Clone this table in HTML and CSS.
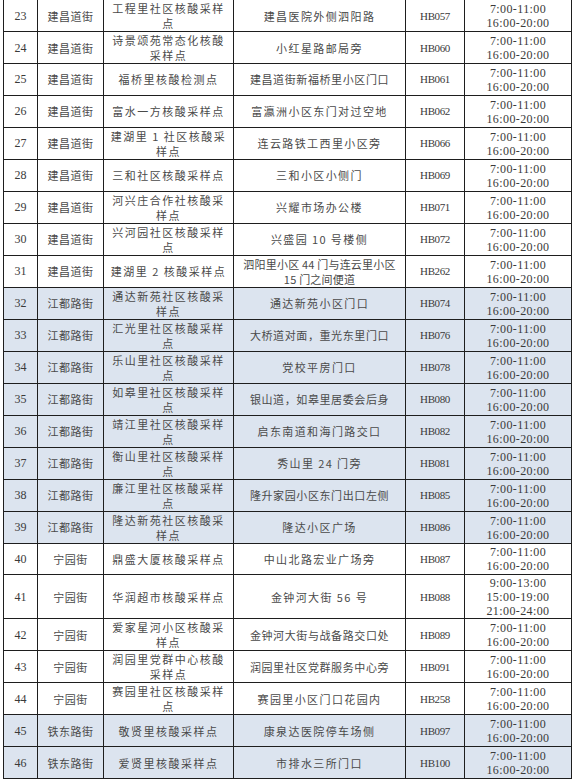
FILE: index.html
```html
<!DOCTYPE html>
<html lang="zh">
<head>
<meta charset="utf-8">
<title>核酸采样点</title>
<link rel="stylesheet" href="styles.css">
</head>
<body>
<div class="sheet">
<table class="grid">
<colgroup>
<col class="c-no"><col class="c-street"><col class="c-site"><col class="c-addr"><col class="c-code"><col class="c-time">
</colgroup>
<tbody>
<tr><td class="no">23</td><td class="street">建昌道街</td><td class="site">工程里社区核酸采样<br>点</td><td class="addr">建昌医院外侧泗阳路</td><td class="code">HB057</td><td class="time">7:00-11:00<br>16:00-20:00</td></tr>
<tr><td class="no">24</td><td class="street">建昌道街</td><td class="site">诗景颂苑常态化核酸<br>采样点</td><td class="addr">小红星路邮局旁</td><td class="code">HB060</td><td class="time">7:00-11:00<br>16:00-20:00</td></tr>
<tr><td class="no">25</td><td class="street">建昌道街</td><td class="site">福桥里核酸检测点</td><td class="addr tight">建昌道街新福桥里小区门口</td><td class="code">HB061</td><td class="time">7:00-11:00<br>16:00-20:00</td></tr>
<tr><td class="no">26</td><td class="street">建昌道街</td><td class="site">富水一方核酸采样点</td><td class="addr">富瀛洲小区东门对过空地</td><td class="code">HB062</td><td class="time">7:00-11:00<br>16:00-20:00</td></tr>
<tr><td class="no">27</td><td class="street">建昌道街</td><td class="site">建湖里 1 社区核酸采<br>样点</td><td class="addr">连云路铁工西里小区旁</td><td class="code">HB066</td><td class="time">7:00-11:00<br>16:00-20:00</td></tr>
<tr><td class="no">28</td><td class="street">建昌道街</td><td class="site">三和社区核酸采样点</td><td class="addr">三和小区小侧门</td><td class="code">HB069</td><td class="time">7:00-11:00<br>16:00-20:00</td></tr>
<tr><td class="no">29</td><td class="street">建昌道街</td><td class="site">河兴庄合作社核酸采<br>样点</td><td class="addr">兴耀市场办公楼</td><td class="code">HB071</td><td class="time">7:00-11:00<br>16:00-20:00</td></tr>
<tr><td class="no">30</td><td class="street">建昌道街</td><td class="site">兴河园社区核酸采样<br>点</td><td class="addr">兴盛园 10 号楼侧</td><td class="code">HB072</td><td class="time">7:00-11:00<br>16:00-20:00</td></tr>
<tr><td class="no">31</td><td class="street">建昌道街</td><td class="site">建湖里 2 核酸采样点</td><td class="addr small">泗阳里小区 44 门与连云里小区<br>15 门之间便道</td><td class="code">HB262</td><td class="time">7:00-11:00<br>16:00-20:00</td></tr>
<tr class="hl"><td class="no">32</td><td class="street">江都路街</td><td class="site">通达新苑社区核酸采<br>样点</td><td class="addr">通达新苑小区门口</td><td class="code">HB074</td><td class="time">7:00-11:00<br>16:00-20:00</td></tr>
<tr class="hl"><td class="no">33</td><td class="street">江都路街</td><td class="site">汇光里社区核酸采样<br>点</td><td class="addr tight">大桥道对面，重光东里门口</td><td class="code">HB076</td><td class="time">7:00-11:00<br>16:00-20:00</td></tr>
<tr class="hl"><td class="no">34</td><td class="street">江都路街</td><td class="site">乐山里社区核酸采样<br>点</td><td class="addr">党校平房门口</td><td class="code">HB078</td><td class="time">7:00-11:00<br>16:00-20:00</td></tr>
<tr class="hl"><td class="no">35</td><td class="street">江都路街</td><td class="site">如皋里社区核酸采样<br>点</td><td class="addr tight">银山道，如皋里居委会后身</td><td class="code">HB080</td><td class="time">7:00-11:00<br>16:00-20:00</td></tr>
<tr class="hl"><td class="no">36</td><td class="street">江都路街</td><td class="site">靖江里社区核酸采样<br>点</td><td class="addr">启东南道和海门路交口</td><td class="code">HB082</td><td class="time">7:00-11:00<br>16:00-20:00</td></tr>
<tr class="hl"><td class="no">37</td><td class="street">江都路街</td><td class="site">衡山里社区核酸采样<br>点</td><td class="addr">秀山里 24 门旁</td><td class="code">HB081</td><td class="time">7:00-11:00<br>16:00-20:00</td></tr>
<tr class="hl"><td class="no">38</td><td class="street">江都路街</td><td class="site">廉江里社区核酸采样<br>点</td><td class="addr tight">隆升家园小区东门出口左侧</td><td class="code">HB085</td><td class="time">7:00-11:00<br>16:00-20:00</td></tr>
<tr class="hl"><td class="no">39</td><td class="street">江都路街</td><td class="site">隆达新苑社区核酸采<br>样点</td><td class="addr">隆达小区广场</td><td class="code">HB086</td><td class="time">7:00-11:00<br>16:00-20:00</td></tr>
<tr><td class="no">40</td><td class="street">宁园街</td><td class="site">鼎盛大厦核酸采样点</td><td class="addr">中山北路宏业广场旁</td><td class="code">HB087</td><td class="time">7:00-11:00<br>16:00-20:00</td></tr>
<tr class="tall"><td class="no">41</td><td class="street">宁园街</td><td class="site">华润超市核酸采样点</td><td class="addr">金钟河大街 56 号</td><td class="code">HB088</td><td class="time">9:00-13:00<br>15:00-19:00<br>21:00-24:00</td></tr>
<tr><td class="no">42</td><td class="street">宁园街</td><td class="site">爱家星河小区核酸采<br>样点</td><td class="addr tight">金钟河大街与战备路交口处</td><td class="code">HB089</td><td class="time">7:00-11:00<br>16:00-20:00</td></tr>
<tr><td class="no">43</td><td class="street">宁园街</td><td class="site">润园里党群中心核酸<br>采样点</td><td class="addr tight">润园里社区党群服务中心旁</td><td class="code">HB091</td><td class="time">7:00-11:00<br>16:00-20:00</td></tr>
<tr><td class="no">44</td><td class="street">宁园街</td><td class="site">赛园里社区核酸采样<br>点</td><td class="addr">赛园里小区门口花园内</td><td class="code">HB258</td><td class="time">7:00-11:00<br>16:00-20:00</td></tr>
<tr class="hl"><td class="no">45</td><td class="street">铁东路街</td><td class="site">敬贤里核酸采样点</td><td class="addr">康泉达医院停车场侧</td><td class="code">HB097</td><td class="time">7:00-11:00<br>16:00-20:00</td></tr>
<tr class="hl"><td class="no">46</td><td class="street">铁东路街</td><td class="site">爱贤里核酸采样点</td><td class="addr">市排水三所门口</td><td class="code">HB100</td><td class="time">7:00-11:00<br>16:00-20:00</td></tr>
</tbody>
</table>
</div>
</body>
</html>
```

FILE: styles.css
```css
html, body {
  margin: 0;
  padding: 0;
  background: #ffffff;
}

.sheet {
  width: 574px;
  height: 780px;
  overflow: hidden;
  padding-left: 3px;
  box-sizing: border-box;
}

.grid {
  margin-top: -1px;
  border-collapse: collapse;
  table-layout: fixed;
  width: 568px;
  color: #4a4a4a;
  font-family: "Noto Sans CJK SC", "Liberation Serif", sans-serif;
  font-size: 11px;
}

.c-no { width: 34px; }
.c-street { width: 66px; }
.c-site { width: 130px; }
.c-addr { width: 172px; }
.c-code { width: 59px; }
.c-time { width: 107px; }

.grid tr {
  height: 31.85px;
}

.grid tr.tall {
  height: 43px;
}

.grid tr.hl td {
  background: #dce4ef;
}

.grid td {
  border: 1px solid #1e1e1e;
  padding: 1px 2px 0;
  text-align: center;
  vertical-align: middle;
  line-height: 15px;
  white-space: nowrap;
  overflow: hidden;
}

.grid td.no {
  font-family: "Liberation Serif", serif;
  font-size: 12px;
  color: #3a3a3a;
}

.grid td.street {
  letter-spacing: 0.5px;
}

.grid td.site {
  letter-spacing: 1.5px;
}

.grid td.addr {
  letter-spacing: 1.4px;
}

.grid td.addr.tight {
  letter-spacing: 0.6px;
}

.grid td.addr.small {
  letter-spacing: 0.2px;
  line-height: 15px;
}

.grid td.code {
  font-family: "Liberation Serif", serif;
  font-size: 11px;
  letter-spacing: -0.4px;
  color: #3a3a3a;
}

.grid td.time {
  font-family: "Liberation Serif", serif;
  font-size: 12px;
  letter-spacing: 0.4px;
  line-height: 14px;
  color: #3a3a3a;
}
```
